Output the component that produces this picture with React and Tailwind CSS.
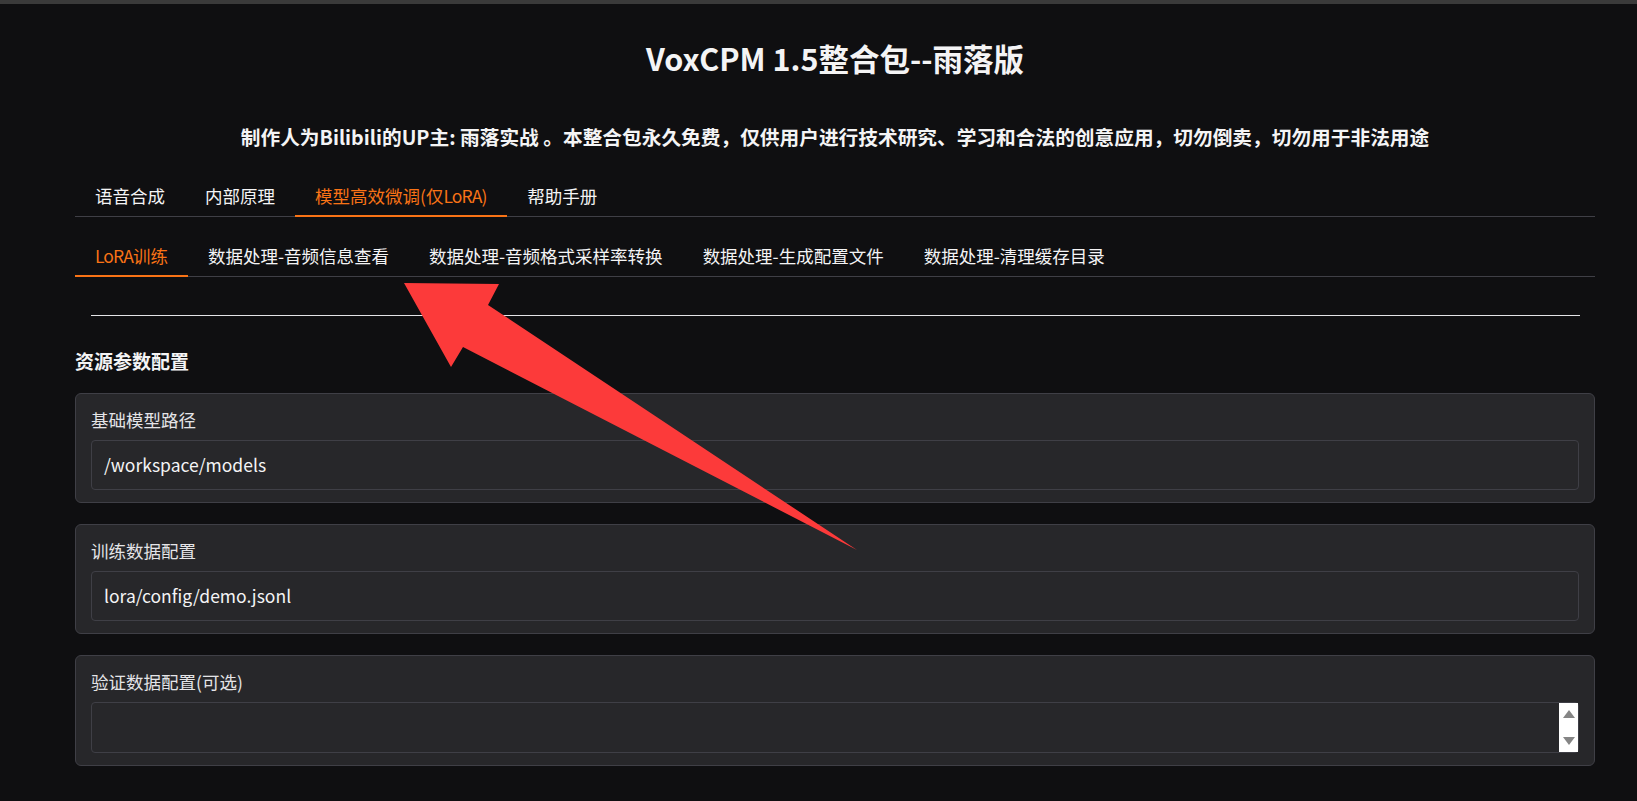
import { useState } from 'react';

const FONT = { fontFamily: '"Noto Sans CJK SC", "Noto Sans", sans-serif' };

const topTabs = ['语音合成', '内部原理', '模型高效微调(仅LoRA)', '帮助手册'];
const subTabs = [
  'LoRA训练',
  '数据处理-音频信息查看',
  '数据处理-音频格式采样率转换',
  '数据处理-生成配置文件',
  '数据处理-清理缓存目录',
];

// "LoRA" is set a touch narrower in the tabs
const TabLabel = ({ text }) => {
  const parts = text.split('LoRA');
  if (parts.length === 1) return text;
  return (
    <>
      {parts[0]}
      <span className="tracking-[-0.9px]">LoRA</span>
      {parts[1]}
    </>
  );
};

const TabBar = ({ tabs, active, onSelect, height }) => (
  <div className="flex border-b border-[#3f3f46]">
    {tabs.map((tab, i) => (
      <button
        key={tab}
        onClick={() => onSelect(i)}
        className={`relative px-5 text-[17.5px] leading-[26px] flex items-center ${height} ${
          active === i ? 'text-[#f97316]' : 'text-[#f4f4f5]'
        }`}
      >
        <TabLabel text={tab} />
        {active === i && <span className="absolute left-0 right-0 bottom-[-1px] h-[2px] bg-[#f97316]" />}
      </button>
    ))}
  </div>
);

const Field = ({ label, value, spinner, tall }) => (
  <div className="rounded-md border border-[#3f3f46] bg-[#27272a] pt-[13px] pb-[12px] px-[15px]">
    <div className="text-[17.5px] leading-[26px] text-[#e4e4e7] mb-[7px]">{label}</div>
    <div
      className={`relative flex items-center rounded-[4px] border border-[#3f3f46] bg-[#27272a] px-3 ${
        tall ? 'h-[51px]' : 'h-[50px]'
      }`}
    >
      <span className="text-[17.5px] text-[#f4f4f5]">{value}</span>
      {spinner && (
        <div className="absolute right-0 top-0 bottom-0 w-[19px] bg-white flex flex-col items-center justify-between py-[7px]">
          <span className="w-0 h-0 border-l-[6px] border-r-[6px] border-b-[8px] border-l-transparent border-r-transparent border-b-[#858585]" />
          <span className="w-0 h-0 border-l-[6px] border-r-[6px] border-t-[8px] border-l-transparent border-r-transparent border-t-[#858585]" />
        </div>
      )}
    </div>
  </div>
);

export default function App() {
  const [top, setTop] = useState(2);
  const [sub, setSub] = useState(0);

  return (
    <div className="relative h-[801px] overflow-hidden bg-[#0f0f11] text-white" style={FONT}>
      {/* window strip */}
      <div className="h-[4px] bg-[#3a3a3a]" />

      <div className="ml-[75px] w-[1520px]">
        <h1 className="pt-[33px] text-center text-[30.5px] leading-[42px] font-bold text-[#f4f4f5]">
          VoxCPM 1.5整合包--雨落版
        </h1>
        <p className="mt-[43px] text-center text-[19.7px] leading-[30px] font-bold text-[#f4f4f5]">
          制作人为Bilibili的UP主: 雨落实战 。本整合包永久免费，仅供用户进行技术研究、学习和合法的创意应用，切勿倒卖，切勿用于非法用途
        </p>

        <div className="mt-[23px]">
          <TabBar tabs={topTabs} active={top} onSelect={setTop} height="h-[41px]" />
        </div>
        <div className="mt-[19px]">
          <TabBar tabs={subTabs} active={sub} onSelect={setSub} height="h-[40px]" />
        </div>

        <div className="mt-[38px] ml-[16px] mr-[15px] h-px bg-[#e4e4e7]" />

        <h3 className="mt-[31px] text-[19px] leading-[28px] font-bold text-[#f4f4f5]">资源参数配置</h3>

        <div className="mt-[18px] flex flex-col gap-[21px]">
          <Field label="基础模型路径" value="/workspace/models" />
          <Field label="训练数据配置" value="lora/config/demo.jsonl" />
          <Field label="验证数据配置(可选)" value="" spinner tall />
        </div>
      </div>

      {/* annotation arrow */}
      <svg className="absolute inset-0 pointer-events-none" width="1637" height="801" viewBox="0 0 1637 801">
        <polygon points="404,283 499,284 488,305 857,550 463,347 451,367" fill="#fc3a3a" />
      </svg>
    </div>
  );
}
